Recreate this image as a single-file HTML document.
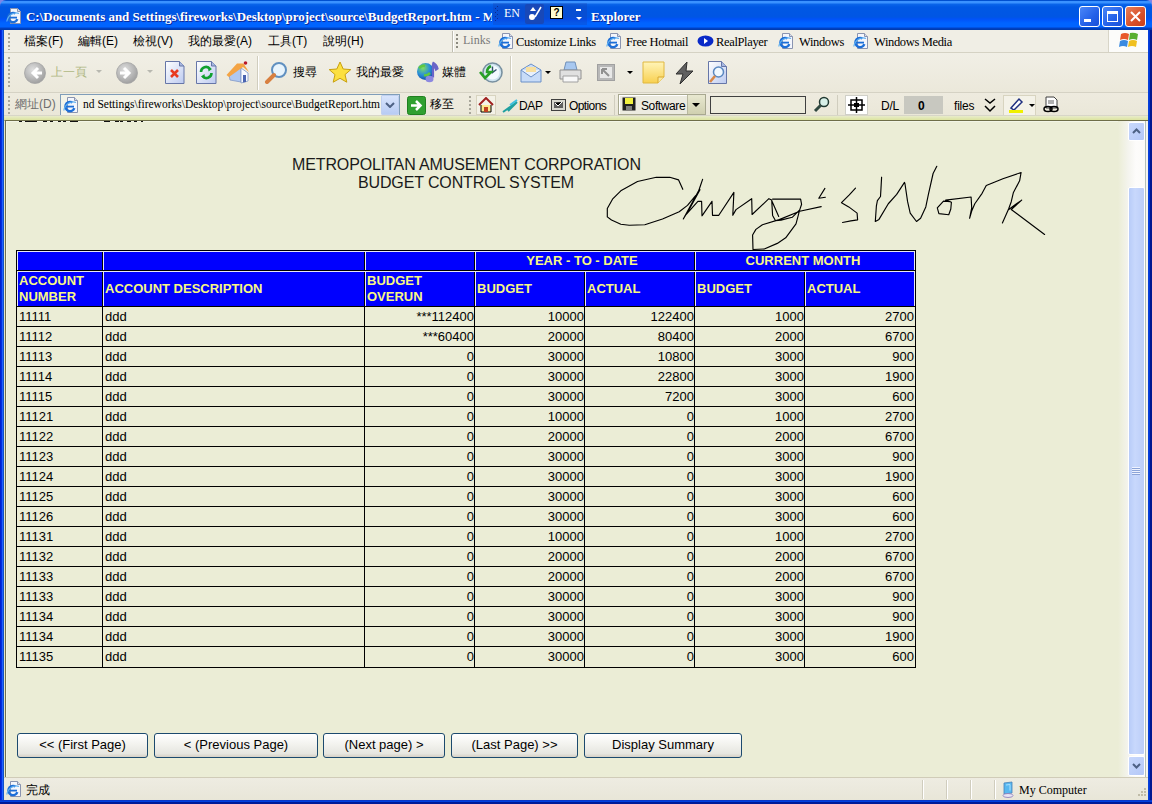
<!DOCTYPE html><html><head><meta charset="utf-8"><title>BudgetReport</title><style>
*{margin:0;padding:0;box-sizing:border-box}
html,body{width:1152px;height:804px;overflow:hidden;background:#7C86E8;font-family:"Liberation Sans",sans-serif}
.ab{position:absolute}
.t{position:absolute;white-space:nowrap;line-height:1}
.serif{font-family:"Liberation Serif",serif}
</style></head><body>
<svg width="0" height="0" style="position:absolute"><defs><linearGradient id="pg" x1="0" y1="0" x2="1" y2="1"><stop offset="0" stop-color="#FFFFFF"/><stop offset="1" stop-color="#BCCAF0"/></linearGradient><radialGradient id="gl" cx="0.35" cy="0.3" r="0.8"><stop offset="0" stop-color="#80E060"/><stop offset="0.5" stop-color="#2A90D8"/><stop offset="1" stop-color="#1040A0"/></radialGradient><radialGradient id="cg" cx="0.4" cy="0.35" r="0.7"><stop offset="0" stop-color="#E0E0E0"/><stop offset="1" stop-color="#9C9C9C"/></radialGradient><linearGradient id="nt" x1="0" y1="0" x2="0" y2="1"><stop offset="0" stop-color="#FFF4B8"/><stop offset="1" stop-color="#F8D050"/></linearGradient></defs></svg>
<div class="ab" style="left:0;top:8px;width:1152px;height:796px;background:#0831D9"></div>
<div class="ab" style="left:0;top:8px;width:4px;height:796px;background:linear-gradient(90deg,#0020D0 0 1px,#0030E0 1px 2px,#2060FF 2px 3px,#1050C8 3px 4px)"></div>
<div class="ab" style="left:1148px;top:8px;width:4px;height:796px;background:linear-gradient(90deg,#0840D8 0 1px,#0038D8 1px 2px,#001890 2px 4px)"></div>
<div class="ab" style="left:0;top:800px;width:1152px;height:4px;background:linear-gradient(#0838C8 0 1px,#0040E0 1px 2px,#001A98 2px 4px)"></div>
<div class="ab" style="left:0;top:0;width:1152px;height:30px;border-radius:6px 6px 0 0;background:linear-gradient(#0050D0 0,#0050D0 1px,#3A92FF 1px,#3A92FF 3px,#0A66EA 4px,#0058E4 7px,#0056E4 17px,#0052F8 19px,#0064FF 23px,#0064FF 27px,#0042C8 28px,#003AA8 30px)"></div>
<svg class="ab" style="left:6px;top:8px" width="16" height="16" viewBox="0 0 16 16"><path d="M4.5 0.5h7l3 3v12h-10z" fill="#F4F6FC" stroke="#8A94B0"/><path d="M11.5 0.5v3h3" fill="#D8DCE8" stroke="#8A94B0"/><circle cx="7" cy="9.5" r="4.6" fill="none" stroke="#1C6ED8" stroke-width="2.4" stroke-dasharray="22 7" transform="rotate(20 7 9.5)"/><path d="M3 9.6h8" stroke="#1C6ED8" stroke-width="1.8"/><path d="M0.8 13.5C2 7 8 3.5 13 5.5" stroke="#60B0F0" stroke-width="1.2" fill="none"/></svg>
<div class="t serif" style="left:26px;top:10px;font-size:13px;font-weight:bold;color:#fff;letter-spacing:-0.02px;text-shadow:1px 1px 0 #0A2A9A">C:\Documents and Settings\fireworks\Desktop\project\source\BudgetReport.htm - M</div>
<div class="ab" style="left:492px;top:0;width:96px;height:30px;background:linear-gradient(#0050D0 0,#0050D0 1px,#3A92FF 1px,#3A92FF 3px,#0A66EA 4px,#0058E4 7px,#0056E4 17px,#0052F8 19px,#0064FF 23px,#0064FF 27px,#0042C8 28px,#003AA8 30px)"></div>
<div class="ab" style="left:493px;top:3px;width:94px;height:22px;background:rgba(30,50,150,0.22)"></div>
<div class="t serif" style="left:504px;top:7px;font-size:12px;color:#fff">EN</div>
<div class="ab" style="left:525px;top:4px;width:19px;height:20px;background:#1848B8;border-radius:2px"></div>
<svg class="ab" style="left:527px;top:5px" width="15" height="17" viewBox="0 0 15 17"><path d="M3 6l3-4 3 4z" fill="#fff"/><circle cx="5" cy="12" r="3" fill="#fff"/><path d="M8 12L14 2" stroke="#fff" stroke-width="1.5"/></svg>
<div class="ab" style="left:497px;top:6px;width:1px;height:1px;background:#0A2A90"></div>
<div class="ab" style="left:495px;top:8px;width:1px;height:1px;background:#0A2A90"></div>
<div class="ab" style="left:497px;top:10px;width:1px;height:1px;background:#0A2A90"></div>
<div class="ab" style="left:495px;top:12px;width:1px;height:1px;background:#0A2A90"></div>
<div class="ab" style="left:497px;top:14px;width:1px;height:1px;background:#0A2A90"></div>
<div class="ab" style="left:495px;top:16px;width:1px;height:1px;background:#0A2A90"></div>
<div class="ab" style="left:497px;top:18px;width:1px;height:1px;background:#0A2A90"></div>
<div class="ab" style="left:495px;top:20px;width:1px;height:1px;background:#0A2A90"></div>
<div class="ab" style="left:550px;top:6px;width:13px;height:13px;background:#FFFCD0;border:1px solid #000;font:bold 10px 'Liberation Sans';text-align:center;line-height:11px">?</div>
<div class="ab" style="left:576px;top:9px;width:5px;height:2px;background:#fff"></div><svg class="ab" style="left:576px;top:17px" width="6" height="4"><path d="M0 0h6L3 3z" fill="#fff"/></svg>
<div class="t serif" style="left:591px;top:10px;font-size:13px;font-weight:bold;color:#fff;text-shadow:1px 1px 0 #0A2A9A">Explorer</div>
<div class="ab" style="left:1079px;top:6px;width:21px;height:21px;border:1px solid #fff;border-radius:3px;background:linear-gradient(135deg,#4A86F8,#2360E8 60%,#1A50D8)"><div class="ab" style="left:4px;top:12px;width:7px;height:3px;background:#fff"></div></div>
<div class="ab" style="left:1102px;top:6px;width:21px;height:21px;border:1px solid #fff;border-radius:3px;background:linear-gradient(135deg,#4A86F8,#2360E8 60%,#1A50D8)"><div class="ab" style="left:4px;top:4px;width:11px;height:11px;border:1px solid #fff;border-top-width:3px"></div></div>
<div class="ab" style="left:1125px;top:6px;width:21px;height:21px;border:1px solid #fff;border-radius:3px;background:linear-gradient(135deg,#E8805A,#D8502A 60%,#C8401A)"><svg class="ab" style="left:3px;top:3px" width="13" height="13"><path d="M2 2L11 11M11 2L2 11" stroke="#fff" stroke-width="2"/></svg></div>
<div class="ab" style="left:4px;top:30px;width:1144px;height:23px;background:#F0EEE5"></div>
<div class="ab" style="left:4px;top:52px;width:1144px;height:1px;background:#D5D2C4"></div>
<div class="t" style="left:24px;top:35px;font-size:12px;color:#000">檔案(F)</div>
<div class="t" style="left:78px;top:35px;font-size:12px;color:#000">編輯(E)</div>
<div class="t" style="left:133px;top:35px;font-size:12px;color:#000">檢視(V)</div>
<div class="t" style="left:188px;top:35px;font-size:12px;color:#000">我的最愛(A)</div>
<div class="t" style="left:268px;top:35px;font-size:12px;color:#000">工具(T)</div>
<div class="t" style="left:323px;top:35px;font-size:12px;color:#000">說明(H)</div>
<div class="ab" style="left:8px;top:33px;width:2px;height:17px;background:repeating-linear-gradient(#A8A69A 0 2px,transparent 2px 4px)"></div>
<div class="ab" style="left:452px;top:31px;width:1px;height:21px;background:#C0BEB2"></div><div class="ab" style="left:453px;top:31px;width:1px;height:21px;background:#fff"></div>
<div class="ab" style="left:456px;top:34px;width:2px;height:14px;background:repeating-linear-gradient(#8C8A80 0 2px,transparent 2px 4px)"></div>
<div class="t serif" style="left:463px;top:34px;font-size:12px;color:#7A7A7A">Links</div>
<svg class="ab" style="left:498px;top:33px" width="16" height="16" viewBox="0 0 16 16"><path d="M4.5 0.5h7l3 3v12h-10z" fill="#F4F6FC" stroke="#8A94B0"/><path d="M11.5 0.5v3h3" fill="#D8DCE8" stroke="#8A94B0"/><circle cx="7" cy="9.5" r="4.6" fill="none" stroke="#1C6ED8" stroke-width="2.4" stroke-dasharray="22 7" transform="rotate(20 7 9.5)"/><path d="M3 9.6h8" stroke="#1C6ED8" stroke-width="1.8"/><path d="M0.8 13.5C2 7 8 3.5 13 5.5" stroke="#60B0F0" stroke-width="1.2" fill="none"/></svg>
<div class="t serif" style="left:516px;top:36px;font-size:12.5px;letter-spacing:-0.35px;color:#000">Customize Links</div>
<svg class="ab" style="left:606px;top:33px" width="16" height="16" viewBox="0 0 16 16"><path d="M4.5 0.5h7l3 3v12h-10z" fill="#F4F6FC" stroke="#8A94B0"/><path d="M11.5 0.5v3h3" fill="#D8DCE8" stroke="#8A94B0"/><circle cx="7" cy="9.5" r="4.6" fill="none" stroke="#1C6ED8" stroke-width="2.4" stroke-dasharray="22 7" transform="rotate(20 7 9.5)"/><path d="M3 9.6h8" stroke="#1C6ED8" stroke-width="1.8"/><path d="M0.8 13.5C2 7 8 3.5 13 5.5" stroke="#60B0F0" stroke-width="1.2" fill="none"/></svg>
<div class="t serif" style="left:626px;top:36px;font-size:12.5px;letter-spacing:-0.35px;color:#000">Free Hotmail</div>
<svg class="ab" style="left:697px;top:34px" width="17" height="15" viewBox="0 0 17 15"><ellipse cx="8.5" cy="7" rx="8" ry="5.5" fill="#0A2AC8"/><path d="M7 4l4 3-4 3z" fill="#fff"/></svg>
<div class="t serif" style="left:716px;top:36px;font-size:12.5px;letter-spacing:-0.35px;color:#000">RealPlayer</div>
<svg class="ab" style="left:778px;top:33px" width="16" height="16" viewBox="0 0 16 16"><path d="M4.5 0.5h7l3 3v12h-10z" fill="#F4F6FC" stroke="#8A94B0"/><path d="M11.5 0.5v3h3" fill="#D8DCE8" stroke="#8A94B0"/><circle cx="7" cy="9.5" r="4.6" fill="none" stroke="#1C6ED8" stroke-width="2.4" stroke-dasharray="22 7" transform="rotate(20 7 9.5)"/><path d="M3 9.6h8" stroke="#1C6ED8" stroke-width="1.8"/><path d="M0.8 13.5C2 7 8 3.5 13 5.5" stroke="#60B0F0" stroke-width="1.2" fill="none"/></svg>
<div class="t serif" style="left:799px;top:36px;font-size:12.5px;letter-spacing:-0.35px;color:#000">Windows</div>
<svg class="ab" style="left:853px;top:33px" width="16" height="16" viewBox="0 0 16 16"><path d="M4.5 0.5h7l3 3v12h-10z" fill="#F4F6FC" stroke="#8A94B0"/><path d="M11.5 0.5v3h3" fill="#D8DCE8" stroke="#8A94B0"/><circle cx="7" cy="9.5" r="4.6" fill="none" stroke="#1C6ED8" stroke-width="2.4" stroke-dasharray="22 7" transform="rotate(20 7 9.5)"/><path d="M3 9.6h8" stroke="#1C6ED8" stroke-width="1.8"/><path d="M0.8 13.5C2 7 8 3.5 13 5.5" stroke="#60B0F0" stroke-width="1.2" fill="none"/></svg>
<div class="t serif" style="left:874px;top:36px;font-size:12.5px;letter-spacing:-0.35px;color:#000">Windows Media</div>
<div class="ab" style="left:1108px;top:30px;width:40px;height:22px;background:#FCFCFA;border-left:1px solid #D8D5C8"></div>
<svg class="ab" style="left:1119px;top:32px" width="20" height="18" viewBox="0 0 20 18"><path d="M2 2q4-2 8 0l-1 6q-4-2-8 0z" fill="#E8582A"/><path d="M11 1q4-1 8 1l-1 6q-4-2-8-0z" fill="#5AB030"/><path d="M1 9q4-2 8 0l-1 6q-4-2-8 0z" fill="#3A8AE0"/><path d="M10 9q4-2 8 0l-1 6q-4-2-8 0z" fill="#F0C020"/></svg>
<div class="ab" style="left:4px;top:53px;width:1144px;height:40px;background:linear-gradient(#F1EFE6,#EBE8DA)"></div>
<div class="ab" style="left:4px;top:92px;width:1144px;height:1px;background:#D5D2C4"></div>
<div class="ab" style="left:8px;top:57px;width:2px;height:32px;background:repeating-linear-gradient(#A8A69A 0 2px,transparent 2px 4px)"></div>
<svg class="ab" style="left:24px;top:62px" width="22" height="22" viewBox="0 0 22 22"><circle cx="11" cy="11" r="10.5" fill="url(#cg)" stroke="#A4A4A4" stroke-width="0.8"/><path d="M14 6l-5 5 5 5M9 11h9" stroke="#fff" stroke-width="3" fill="none"/></svg>
<div class="t" style="left:51px;top:66px;font-size:12px;color:#B0B884">上一頁</div>
<svg class="ab" style="left:96px;top:70px" width="6" height="4"><path d="M0 0h6L3 3z" fill="#B8B8B0"/></svg>
<svg class="ab" style="left:116px;top:62px" width="22" height="22" viewBox="0 0 22 22"><circle cx="11" cy="11" r="10.5" fill="url(#cg)" stroke="#A4A4A4" stroke-width="0.8"/><path d="M8 6l5 5-5 5M13 11H4" stroke="#fff" stroke-width="3" fill="none"/></svg>
<svg class="ab" style="left:147px;top:70px" width="6" height="4"><path d="M0 0h6L3 3z" fill="#B8B8B0"/></svg>
<svg class="ab" style="left:165px;top:61px" width="20" height="23" viewBox="0 0 20 23"><path d="M0.5 0.5h14l4.5 4.5v17.5h-18.5z" fill="url(#pg)" stroke="#6676A8"/><path d="M14.5 0.5v4.5h4.5" fill="#A8B8E0" stroke="#6676A8"/><path d="M6 9l7 7M13 9l-7 7" stroke="#E83A20" stroke-width="2.6"/></svg>
<svg class="ab" style="left:196px;top:61px" width="21" height="23" viewBox="0 0 21 23"><path d="M0.5 0.5h15l4.5 4.5v17.5h-19.5z" fill="url(#pg)" stroke="#6676A8"/><path d="M15.5 0.5v4.5h4.5" fill="#A8B8E0" stroke="#6676A8"/><path d="M5 11a5 5 0 0 1 9-3M15.5 12a5 5 0 0 1-9 3" stroke="#10A030" stroke-width="2.6" fill="none"/><path d="M12 5.5l4 2.5-3.5 2.5zM9 18l-4-2.5 3.5-2.5z" fill="#10A030"/></svg>
<svg class="ab" style="left:226px;top:60px" width="24" height="24" viewBox="0 0 24 24"><path d="M3 14L13 6l2 2v14L4 20z" fill="#B0C8F0" stroke="#8098C8" stroke-width="0.8"/><path d="M15 8l7 5v8l-7 2z" fill="#F8FAFF" stroke="#8098C8" stroke-width="0.8"/><path d="M0.5 15L11 3.5h6.5L23 12l-6-5L3 17z" fill="#F4A444"/><path d="M17 15h3v7l-3 0.6z" fill="#4A64B0"/><circle cx="19.5" cy="3" r="1.8" fill="#B81828"/></svg>
<div class="ab" style="left:257px;top:56px;width:1px;height:34px;background:#D0CDBE"></div><div class="ab" style="left:258px;top:56px;width:1px;height:34px;background:#fff"></div>
<svg class="ab" style="left:264px;top:61px" width="25" height="23" viewBox="0 0 25 23"><circle cx="15" cy="9" r="7" fill="#E8F4FC" stroke="#6090C0" stroke-width="2"/><path d="M10 14L3 21" stroke="#D88040" stroke-width="4" stroke-linecap="round"/></svg>
<div class="t" style="left:293px;top:66px;font-size:12px;color:#000">搜尋</div>
<svg class="ab" style="left:328px;top:61px" width="24" height="23" viewBox="0 0 24 23"><path d="M12 1l3.2 7 7.6.6-5.8 5 1.8 7.6L12 17.3 5.2 21.2 7 13.6 1.2 8.6 8.8 8z" fill="#FCE040" stroke="#C8A010"/></svg>
<div class="t" style="left:356px;top:66px;font-size:12px;color:#000">我的最愛</div>
<svg class="ab" style="left:416px;top:61px" width="23" height="23" viewBox="0 0 23 23"><circle cx="9.5" cy="10.5" r="8.5" fill="url(#gl)"/><path d="M3 7q3-3 6-2M8 14q3 1 6-2" stroke="#60C840" stroke-width="2.5" fill="none"/><path d="M16.5 1.5q4 2 5 6l-1.5 1q-1-3-3-4v12" stroke="#6A64C8" stroke-width="2.2" fill="#8A80D8"/><ellipse cx="13.5" cy="18" rx="4" ry="3.2" fill="#8C88E0"/></svg>
<div class="t" style="left:442px;top:66px;font-size:12px;color:#000">媒體</div>
<svg class="ab" style="left:479px;top:61px" width="24" height="23" viewBox="0 0 24 23"><circle cx="13.5" cy="11.5" r="9.5" fill="#D0E4F0" stroke="#7890A0" stroke-width="1.6"/><circle cx="13.5" cy="11.5" r="7" fill="#F4FAFF"/><path d="M13.5 5.5v6l4-3" stroke="#30506A" stroke-width="1.4" fill="none"/><path d="M1 11l5 6 6-6h-4q0-4 4-6" stroke="#28A028" stroke-width="2.6" fill="none"/></svg>
<div class="ab" style="left:510px;top:56px;width:1px;height:34px;background:#D0CDBE"></div><div class="ab" style="left:511px;top:56px;width:1px;height:34px;background:#fff"></div>
<svg class="ab" style="left:520px;top:62px" width="23" height="21" viewBox="0 0 23 21"><path d="M1 8L11 2l10 6v12H1z" fill="#C8DCF8" stroke="#6A90C8"/><path d="M1 8l10 7 10-7" stroke="#6A90C8" fill="#E8F0FC"/><path d="M6 5h10v5H6z" fill="#F8E0A0"/></svg>
<svg class="ab" style="left:545px;top:71px" width="6" height="4"><path d="M0 0h6L3 3z" fill="#000"/></svg>
<svg class="ab" style="left:559px;top:61px" width="23" height="22" viewBox="0 0 23 22"><path d="M7 1h9l2 8H5z" fill="#A8C8F0" stroke="#7090B8"/><path d="M1 9h21v9H1z" fill="#E0E0E0" stroke="#909090"/><path d="M4 15h15v6H4z" fill="#F8F8F8" stroke="#A0A0A0"/></svg>
<svg class="ab" style="left:597px;top:64px" width="18" height="17" viewBox="0 0 18 17"><rect x="0.5" y="0.5" width="17" height="16" fill="#B8B8B8" stroke="#A0A0A0"/><rect x="3" y="3" width="12" height="11" fill="#E8E8E8"/><path d="M5 5l7 7M5 5h5M5 5v5" stroke="#909090" stroke-width="2"/></svg>
<svg class="ab" style="left:627px;top:71px" width="6" height="4"><path d="M0 0h6L3 3z" fill="#000"/></svg>
<svg class="ab" style="left:642px;top:61px" width="23" height="23" viewBox="0 0 23 23"><path d="M1 1h21v15l-6 6H1z" fill="url(#nt)" stroke="#E0B840"/><path d="M16 22v-6h6" fill="#F8E8A0" stroke="#D8A830"/></svg>
<svg class="ab" style="left:673px;top:61px" width="23" height="24" viewBox="0 0 23 24"><path d="M14 1L3 13h7l-3 10 13-13h-7z" fill="#606060" stroke="#303030"/></svg>
<svg class="ab" style="left:708px;top:61px" width="20" height="23" viewBox="0 0 20 23"><path d="M0.5 0.5h13l5 5v17h-18z" fill="url(#pg)" stroke="#6676A8"/><path d="M13.5 0.5v5h5" fill="#A8B8E0" stroke="#6676A8"/><circle cx="10.5" cy="11" r="5" fill="#F0F8FF" stroke="#5A88C0" stroke-width="1.5"/><path d="M7 15l-5 6" stroke="#D88848" stroke-width="2.6"/></svg>
<div class="ab" style="left:4px;top:93px;width:1144px;height:24px;background:linear-gradient(#EEEBDF,#EAE7D8)"></div>
<div class="ab" style="left:8px;top:96px;width:2px;height:19px;background:repeating-linear-gradient(#A8A69A 0 2px,transparent 2px 4px)"></div>
<div class="t" style="left:15px;top:98px;font-size:12px;color:#6E6E6E">網址(D)</div>
<div class="ab" style="left:60px;top:94px;width:340px;height:22px;background:#F3F3E9;border:1px solid #7F9DB9"></div>
<svg class="ab" style="left:63px;top:97px" width="16" height="16" viewBox="0 0 16 16"><path d="M4.5 0.5h7l3 3v12h-10z" fill="#F4F6FC" stroke="#8A94B0"/><path d="M11.5 0.5v3h3" fill="#D8DCE8" stroke="#8A94B0"/><circle cx="7" cy="9.5" r="4.6" fill="none" stroke="#1C6ED8" stroke-width="2.4" stroke-dasharray="22 7" transform="rotate(20 7 9.5)"/><path d="M3 9.6h8" stroke="#1C6ED8" stroke-width="1.8"/><path d="M0.8 13.5C2 7 8 3.5 13 5.5" stroke="#60B0F0" stroke-width="1.2" fill="none"/></svg>
<div class="t serif" style="left:83px;top:99px;font-size:11.5px;color:#000">nd Settings\fireworks\Desktop\project\source\BudgetReport.htm</div>
<div class="ab" style="left:381px;top:95px;width:18px;height:20px;background:linear-gradient(#D8E4FC,#B8CCF4);border:1px solid #C0D0F0;border-radius:1px"></div>
<svg class="ab" style="left:385px;top:102px" width="10" height="6"><path d="M1 1l4 4 4-4" stroke="#4D6185" stroke-width="2" fill="none"/></svg>
<svg class="ab" style="left:407px;top:96px" width="19" height="19" viewBox="0 0 19 19"><rect x="0.5" y="0.5" width="18" height="18" rx="2" fill="#30A030" stroke="#208020"/><path d="M4 9.5h9M9 5l4.5 4.5L9 14" stroke="#fff" stroke-width="2.5" fill="none"/></svg>
<div class="t" style="left:430px;top:98px;font-size:12px;color:#000">移至</div>
<div class="ab" style="left:469px;top:96px;width:2px;height:19px;background:repeating-linear-gradient(#A8A69A 0 2px,transparent 2px 4px)"></div>
<div class="ab" style="left:476px;top:95px;width:20px;height:20px;background:#F4F2E8;border:1px solid #D8D4C0"></div>
<svg class="ab" style="left:478px;top:97px" width="16" height="16" viewBox="0 0 16 16"><path d="M1 8L8 1l7 7" stroke="#A02020" stroke-width="2" fill="none"/><path d="M3 8v7h10V8" fill="#FCE890" stroke="#000"/><rect x="6" y="10" width="4" height="5" fill="#C04020"/></svg>
<svg class="ab" style="left:502px;top:99px" width="16" height="14" viewBox="0 0 16 14"><path d="M1 13L15 3M6 12l9-9" stroke="#20A0A0" stroke-width="2"/><path d="M8 6L15 1" stroke="#40C0E0" stroke-width="2"/></svg>
<div class="t" style="left:519px;top:100px;font-size:12px;letter-spacing:-0.3px;color:#000">DAP</div>
<svg class="ab" style="left:551px;top:97px" width="15" height="14" viewBox="0 0 15 14"><rect x="0.5" y="2.5" width="14" height="11" fill="#D8D8D0" stroke="#404040"/><rect x="3" y="5" width="9" height="6" fill="#606060"/><path d="M4 6l3 3 4-4" stroke="#fff"/></svg>
<div class="t" style="left:569px;top:100px;font-size:12px;letter-spacing:-0.6px;color:#000">Options</div>
<div class="ab" style="left:614px;top:95px;width:1px;height:21px;background:#D0CDBE"></div>
<div class="ab" style="left:618px;top:94px;width:88px;height:21px;background:#ECEBE0;border:1px solid #A8A890;box-shadow:inset 1px 1px 0 #fff"></div>
<svg class="ab" style="left:622px;top:97px" width="14" height="14" viewBox="0 0 14 14"><rect x="0.5" y="0.5" width="13" height="13" fill="#202020"/><rect x="3" y="1" width="8" height="6" fill="#F0F040"/><rect x="4" y="9" width="6" height="4" fill="#808080"/></svg>
<div class="t" style="left:641px;top:100px;font-size:12px;letter-spacing:-0.4px;color:#000">Software</div>
<div class="ab" style="left:687px;top:95px;width:18px;height:19px;background:linear-gradient(#E8E8D0,#D0D0B0);border-left:1px solid #B8B8A0"></div>
<svg class="ab" style="left:692px;top:103px" width="8" height="4"><path d="M0 0h8L4 4z" fill="#000"/></svg>
<div class="ab" style="left:710px;top:96px;width:96px;height:18px;background:#ECEBDC;border:1px solid #404040"></div>
<svg class="ab" style="left:813px;top:96px" width="17" height="17" viewBox="0 0 17 17"><circle cx="11" cy="6" r="4.5" fill="#D8F0E8" stroke="#203830" stroke-width="1.5"/><path d="M8 9l-6 6" stroke="#304840" stroke-width="3"/></svg>
<div class="ab" style="left:837px;top:95px;width:1px;height:21px;background:#D0CDBE"></div>
<div class="ab" style="left:845px;top:95px;width:23px;height:20px;background:#fff;border:1px solid #D0D0C8"></div>
<svg class="ab" style="left:848px;top:97px" width="17" height="16" viewBox="0 0 17 16"><rect x="3" y="3" width="11" height="10" fill="none" stroke="#000" stroke-width="1.5"/><path d="M8.5 0v16M0 8h17" stroke="#000" stroke-width="1.5"/><rect x="6" y="6" width="5" height="4" fill="#000"/></svg>
<div class="t" style="left:881px;top:100px;font-size:12px;letter-spacing:-0.2px;color:#000">D/L</div>
<div class="ab" style="left:904px;top:96px;width:39px;height:18px;background:#C8C8C0"></div>
<div class="t" style="left:918px;top:100px;font-size:12px;font-weight:bold;color:#000">0</div>
<div class="t" style="left:954px;top:100px;font-size:12px;letter-spacing:-0.2px;color:#000">files</div>
<svg class="ab" style="left:984px;top:97px" width="12" height="16" viewBox="0 0 12 16"><path d="M1 2l5 4 5-4M1 9l5 5 5-5" stroke="#000" stroke-width="1.5" fill="none"/></svg>
<div class="ab" style="left:1003px;top:95px;width:33px;height:21px;background:#F4F2E8;border:1px solid #D8D4C0"></div>
<svg class="ab" style="left:1007px;top:96px" width="18" height="18" viewBox="0 0 18 18"><path d="M4 12L12 3l3 3-8 8z" fill="#fff" stroke="#203080" stroke-width="1.5"/><rect x="2" y="14" width="14" height="3" fill="#F0F000"/></svg>
<svg class="ab" style="left:1029px;top:104px" width="6" height="4"><path d="M0 0h6L3 3z" fill="#000"/></svg>
<svg class="ab" style="left:1042px;top:96px" width="18" height="18" viewBox="0 0 18 18"><path d="M4 1h8l3 3v8H4z" fill="#fff" stroke="#404040"/><path d="M6 5h6M6 7h6" stroke="#606060"/><ellipse cx="6" cy="13" rx="4" ry="2.5" fill="none" stroke="#000" stroke-width="1.5"/><ellipse cx="12" cy="13" rx="4" ry="2.5" fill="none" stroke="#000" stroke-width="1.5"/></svg>
<div class="ab" style="left:4px;top:115px;width:1144px;height:1px;background:#D8D6C8"></div>
<div class="ab" style="left:4px;top:116px;width:1144px;height:4px;background:linear-gradient(#E8EBCC,#E2E8B4 50%,#DCE4A0)"></div>
<div class="ab" style="left:4px;top:120px;width:1144px;height:658px;background:#EBEDD6;border-top:1px solid #6E6E48;border-left:1px solid #E4E6C8"></div>
<div class="ab" style="left:5px;top:120px;width:1px;height:657px;background:#707050"></div>
<div class="ab" style="left:6px;top:121px;width:1px;height:656px;background:#F2F5E6"></div>
<div class="ab" style="left:6px;top:121px;width:1112px;height:1px;background:#F2F5E6"></div>
<div class="ab" style="left:19px;top:121px;width:3px;height:1px;background:#111"></div>
<div class="ab" style="left:25px;top:121px;width:12px;height:1px;background:#111"></div>
<div class="ab" style="left:43px;top:121px;width:4px;height:1px;background:#111"></div>
<div class="ab" style="left:50px;top:121px;width:3px;height:1px;background:#111"></div>
<div class="ab" style="left:58px;top:121px;width:3px;height:1px;background:#111"></div>
<div class="ab" style="left:63px;top:121px;width:3px;height:1px;background:#111"></div>
<div class="ab" style="left:70px;top:121px;width:8px;height:1px;background:#111"></div>
<div class="ab" style="left:104px;top:121px;width:6px;height:1px;background:#111"></div>
<div class="ab" style="left:115px;top:121px;width:4px;height:1px;background:#111"></div>
<div class="ab" style="left:120px;top:121px;width:3px;height:1px;background:#111"></div>
<div class="ab" style="left:127px;top:121px;width:4px;height:1px;background:#111"></div>
<div class="ab" style="left:134px;top:121px;width:3px;height:1px;background:#111"></div>
<div class="ab" style="left:141px;top:121px;width:2px;height:1px;background:#111"></div>
<div class="t" style="left:292px;top:157px;width:348px;text-align:center;font-size:16px;letter-spacing:-0.12px;color:#1A1A1A">METROPOLITAN AMUSEMENT CORPORATION</div>
<div class="t" style="left:292px;top:175px;width:348px;text-align:center;font-size:16px;letter-spacing:-0.12px;color:#1A1A1A">BUDGET CONTROL SYSTEM</div>
<svg class="ab" style="left:0;top:0" width="1152" height="804"><path d="M682.8 189.3L678.6 179.9L669.8 177.3L656.3 177.3L637.5 181.5L620.8 190.8L612.5 199.2L607.3 208.5L607.3 216.9L611.5 220L620.8 224.2L629.2 225.2L644.8 224.7L662.5 219L679.2 211.7L687.5 205.4L697.9 192.9L702.6 179.4L699 190L683.3 219L690 208L700 189.8M684.9 215.8L697.9 201.3L701.6 201.3L702 215.8L712 201.3L712.5 215.3L718.8 215.3L733.9 192.4L732.8 215.3L736 209.6L751.7 198.7L752.1 214.5L768.9 198.7L771.7 200L772.6 215.4L775.4 220.6M771.9 201L778.7 216.4M772.6 199.1L800.6 199.1L801.6 204.3L799.7 209.9L792.2 217.3L781 220.1L775.4 220.6M799.7 209.9L796 223.8L785.7 237.8L777.3 243.4L764.3 249L753 249.5L752.6 235L755.9 229.4L762.4 224.8L779.2 219.6L799.7 211.25L821.2 206.6M824.9 188.4L818.8 198.2L825.4 197.3M855.5 188.1L849.3 194.9L841.5 202.7L848.75 206.9L857.1 213.1L857.6 219.9L850.8 220.9L842.5 222.5M881.6 177.2L881 188.1L880.5 196.5L877.4 200.6L876.4 205.8L875.3 221.5L879 219.4L888.3 203.75L896.7 194.4L904.5 182.4L905 184L907.6 201.7L910.2 213.1L916.5 221.5L920.6 218.3L925.8 206.9L928.4 194.4L933.1 173.5L936.8 166.25M950.8 201.7L943.5 201.1L937.3 207.9L938.9 213.6L948.75 214.7L950.8 209L951.4 202.2L945.6 200.1L971.1 197L971.7 207.9L969.6 218.3L971.7 211L974.8 203.75L982.1 193.3L986.25 185.5L1002.9 178.75L1021.1 172.5L1019.6 180.8L1013.3 192.8L1011.25 201.7L1008.6 209L1002.4 223M1008.1 210L1016.5 203.75L1021.7 200.1L1011.25 209.5L1044.6 234.5" fill="none" stroke="#000" stroke-width="1.15" stroke-linejoin="round" stroke-linecap="round"/></svg>
<div class="ab" style="left:16px;top:250px;width:900px;height:57px;background:#0000FF"></div>
<div class="ab" style="left:16px;top:306px;width:900px;height:362px;background:#EBEDD6"></div>
<div class="ab" style="left:16px;top:250px;width:1px;height:57px;background:#000"></div>
<div class="ab" style="left:17px;top:251px;width:1px;height:55px;background:#E8E8F8"></div>
<div class="ab" style="left:102px;top:250px;width:1px;height:57px;background:#000"></div>
<div class="ab" style="left:103px;top:251px;width:1px;height:55px;background:#E8E8F8"></div>
<div class="ab" style="left:364px;top:250px;width:1px;height:57px;background:#000"></div>
<div class="ab" style="left:365px;top:251px;width:1px;height:55px;background:#E8E8F8"></div>
<div class="ab" style="left:474px;top:250px;width:1px;height:57px;background:#000"></div>
<div class="ab" style="left:475px;top:251px;width:1px;height:55px;background:#E8E8F8"></div>
<div class="ab" style="left:584px;top:270px;width:1px;height:37px;background:#000"></div>
<div class="ab" style="left:585px;top:271px;width:1px;height:35px;background:#E8E8F8"></div>
<div class="ab" style="left:694px;top:250px;width:1px;height:57px;background:#000"></div>
<div class="ab" style="left:695px;top:251px;width:1px;height:55px;background:#E8E8F8"></div>
<div class="ab" style="left:804px;top:270px;width:1px;height:37px;background:#000"></div>
<div class="ab" style="left:805px;top:271px;width:1px;height:35px;background:#E8E8F8"></div>
<div class="ab" style="left:914px;top:251px;width:1px;height:55px;background:#E8E8F8"></div>
<div class="ab" style="left:915px;top:250px;width:1px;height:418px;background:#000"></div>
<div class="ab" style="left:16px;top:250px;width:900px;height:1px;background:#000"></div>
<div class="ab" style="left:17px;top:251px;width:898px;height:1px;background:#E8E8F8"></div>
<div class="ab" style="left:16px;top:270px;width:900px;height:1px;background:#000"></div>
<div class="ab" style="left:17px;top:271px;width:898px;height:1px;background:#E8E8F8"></div>
<div class="ab" style="left:16px;top:306px;width:1px;height:362px;background:#000"></div>
<div class="ab" style="left:102px;top:306px;width:1px;height:362px;background:#000"></div>
<div class="ab" style="left:364px;top:306px;width:1px;height:362px;background:#000"></div>
<div class="ab" style="left:474px;top:306px;width:1px;height:362px;background:#000"></div>
<div class="ab" style="left:584px;top:306px;width:1px;height:362px;background:#000"></div>
<div class="ab" style="left:694px;top:306px;width:1px;height:362px;background:#000"></div>
<div class="ab" style="left:804px;top:306px;width:1px;height:362px;background:#000"></div>
<div class="ab" style="left:16px;top:306px;width:900px;height:1px;background:#000"></div>
<div class="ab" style="left:16px;top:326px;width:900px;height:1px;background:#000"></div>
<div class="ab" style="left:16px;top:346px;width:900px;height:1px;background:#000"></div>
<div class="ab" style="left:16px;top:366px;width:900px;height:1px;background:#000"></div>
<div class="ab" style="left:16px;top:386px;width:900px;height:1px;background:#000"></div>
<div class="ab" style="left:16px;top:406px;width:900px;height:1px;background:#000"></div>
<div class="ab" style="left:16px;top:426px;width:900px;height:1px;background:#000"></div>
<div class="ab" style="left:16px;top:446px;width:900px;height:1px;background:#000"></div>
<div class="ab" style="left:16px;top:466px;width:900px;height:1px;background:#000"></div>
<div class="ab" style="left:16px;top:486px;width:900px;height:1px;background:#000"></div>
<div class="ab" style="left:16px;top:506px;width:900px;height:1px;background:#000"></div>
<div class="ab" style="left:16px;top:526px;width:900px;height:1px;background:#000"></div>
<div class="ab" style="left:16px;top:546px;width:900px;height:1px;background:#000"></div>
<div class="ab" style="left:16px;top:566px;width:900px;height:1px;background:#000"></div>
<div class="ab" style="left:16px;top:586px;width:900px;height:1px;background:#000"></div>
<div class="ab" style="left:16px;top:606px;width:900px;height:1px;background:#000"></div>
<div class="ab" style="left:16px;top:626px;width:900px;height:1px;background:#000"></div>
<div class="ab" style="left:16px;top:646px;width:900px;height:1px;background:#000"></div>
<div class="ab" style="left:16px;top:667px;width:900px;height:1px;background:#000"></div>
<div class="t" style="left:472px;top:254px;width:220px;text-align:center;font-size:13px;font-weight:bold;color:#F8F884">YEAR - TO - DATE</div>
<div class="t" style="left:693px;top:254px;width:220px;text-align:center;font-size:13px;font-weight:bold;color:#F8F884">CURRENT MONTH</div>
<div class="t" style="left:19px;top:273px;font-size:13px;font-weight:bold;color:#F8F884;line-height:16px">ACCOUNT<br>NUMBER</div>
<div class="t" style="left:105px;top:282px;font-size:13px;font-weight:bold;color:#F8F884">ACCOUNT DESCRIPTION</div>
<div class="t" style="left:367px;top:273px;font-size:13px;font-weight:bold;color:#F8F884;line-height:16px">BUDGET<br>OVERUN</div>
<div class="t" style="left:477px;top:282px;font-size:13px;font-weight:bold;color:#F8F884">BUDGET</div>
<div class="t" style="left:587px;top:282px;font-size:13px;font-weight:bold;color:#F8F884">ACTUAL</div>
<div class="t" style="left:697px;top:282px;font-size:13px;font-weight:bold;color:#F8F884">BUDGET</div>
<div class="t" style="left:807px;top:282px;font-size:13px;font-weight:bold;color:#F8F884">ACTUAL</div>
<div class="t" style="left:19px;top:310px;font-size:13px;color:#000">11111</div>
<div class="t" style="left:105px;top:310px;font-size:13px;color:#000">ddd</div>
<div class="t" style="left:364px;top:310px;width:110px;text-align:right;font-size:13px;color:#000">***112400</div>
<div class="t" style="left:474px;top:310px;width:110px;text-align:right;font-size:13px;color:#000">10000</div>
<div class="t" style="left:584px;top:310px;width:110px;text-align:right;font-size:13px;color:#000">122400</div>
<div class="t" style="left:694px;top:310px;width:110px;text-align:right;font-size:13px;color:#000">1000</div>
<div class="t" style="left:804px;top:310px;width:110px;text-align:right;font-size:13px;color:#000">2700</div>
<div class="t" style="left:19px;top:330px;font-size:13px;color:#000">11112</div>
<div class="t" style="left:105px;top:330px;font-size:13px;color:#000">ddd</div>
<div class="t" style="left:364px;top:330px;width:110px;text-align:right;font-size:13px;color:#000">***60400</div>
<div class="t" style="left:474px;top:330px;width:110px;text-align:right;font-size:13px;color:#000">20000</div>
<div class="t" style="left:584px;top:330px;width:110px;text-align:right;font-size:13px;color:#000">80400</div>
<div class="t" style="left:694px;top:330px;width:110px;text-align:right;font-size:13px;color:#000">2000</div>
<div class="t" style="left:804px;top:330px;width:110px;text-align:right;font-size:13px;color:#000">6700</div>
<div class="t" style="left:19px;top:350px;font-size:13px;color:#000">11113</div>
<div class="t" style="left:105px;top:350px;font-size:13px;color:#000">ddd</div>
<div class="t" style="left:364px;top:350px;width:110px;text-align:right;font-size:13px;color:#000">0</div>
<div class="t" style="left:474px;top:350px;width:110px;text-align:right;font-size:13px;color:#000">30000</div>
<div class="t" style="left:584px;top:350px;width:110px;text-align:right;font-size:13px;color:#000">10800</div>
<div class="t" style="left:694px;top:350px;width:110px;text-align:right;font-size:13px;color:#000">3000</div>
<div class="t" style="left:804px;top:350px;width:110px;text-align:right;font-size:13px;color:#000">900</div>
<div class="t" style="left:19px;top:370px;font-size:13px;color:#000">11114</div>
<div class="t" style="left:105px;top:370px;font-size:13px;color:#000">ddd</div>
<div class="t" style="left:364px;top:370px;width:110px;text-align:right;font-size:13px;color:#000">0</div>
<div class="t" style="left:474px;top:370px;width:110px;text-align:right;font-size:13px;color:#000">30000</div>
<div class="t" style="left:584px;top:370px;width:110px;text-align:right;font-size:13px;color:#000">22800</div>
<div class="t" style="left:694px;top:370px;width:110px;text-align:right;font-size:13px;color:#000">3000</div>
<div class="t" style="left:804px;top:370px;width:110px;text-align:right;font-size:13px;color:#000">1900</div>
<div class="t" style="left:19px;top:390px;font-size:13px;color:#000">11115</div>
<div class="t" style="left:105px;top:390px;font-size:13px;color:#000">ddd</div>
<div class="t" style="left:364px;top:390px;width:110px;text-align:right;font-size:13px;color:#000">0</div>
<div class="t" style="left:474px;top:390px;width:110px;text-align:right;font-size:13px;color:#000">30000</div>
<div class="t" style="left:584px;top:390px;width:110px;text-align:right;font-size:13px;color:#000">7200</div>
<div class="t" style="left:694px;top:390px;width:110px;text-align:right;font-size:13px;color:#000">3000</div>
<div class="t" style="left:804px;top:390px;width:110px;text-align:right;font-size:13px;color:#000">600</div>
<div class="t" style="left:19px;top:410px;font-size:13px;color:#000">11121</div>
<div class="t" style="left:105px;top:410px;font-size:13px;color:#000">ddd</div>
<div class="t" style="left:364px;top:410px;width:110px;text-align:right;font-size:13px;color:#000">0</div>
<div class="t" style="left:474px;top:410px;width:110px;text-align:right;font-size:13px;color:#000">10000</div>
<div class="t" style="left:584px;top:410px;width:110px;text-align:right;font-size:13px;color:#000">0</div>
<div class="t" style="left:694px;top:410px;width:110px;text-align:right;font-size:13px;color:#000">1000</div>
<div class="t" style="left:804px;top:410px;width:110px;text-align:right;font-size:13px;color:#000">2700</div>
<div class="t" style="left:19px;top:430px;font-size:13px;color:#000">11122</div>
<div class="t" style="left:105px;top:430px;font-size:13px;color:#000">ddd</div>
<div class="t" style="left:364px;top:430px;width:110px;text-align:right;font-size:13px;color:#000">0</div>
<div class="t" style="left:474px;top:430px;width:110px;text-align:right;font-size:13px;color:#000">20000</div>
<div class="t" style="left:584px;top:430px;width:110px;text-align:right;font-size:13px;color:#000">0</div>
<div class="t" style="left:694px;top:430px;width:110px;text-align:right;font-size:13px;color:#000">2000</div>
<div class="t" style="left:804px;top:430px;width:110px;text-align:right;font-size:13px;color:#000">6700</div>
<div class="t" style="left:19px;top:450px;font-size:13px;color:#000">11123</div>
<div class="t" style="left:105px;top:450px;font-size:13px;color:#000">ddd</div>
<div class="t" style="left:364px;top:450px;width:110px;text-align:right;font-size:13px;color:#000">0</div>
<div class="t" style="left:474px;top:450px;width:110px;text-align:right;font-size:13px;color:#000">30000</div>
<div class="t" style="left:584px;top:450px;width:110px;text-align:right;font-size:13px;color:#000">0</div>
<div class="t" style="left:694px;top:450px;width:110px;text-align:right;font-size:13px;color:#000">3000</div>
<div class="t" style="left:804px;top:450px;width:110px;text-align:right;font-size:13px;color:#000">900</div>
<div class="t" style="left:19px;top:470px;font-size:13px;color:#000">11124</div>
<div class="t" style="left:105px;top:470px;font-size:13px;color:#000">ddd</div>
<div class="t" style="left:364px;top:470px;width:110px;text-align:right;font-size:13px;color:#000">0</div>
<div class="t" style="left:474px;top:470px;width:110px;text-align:right;font-size:13px;color:#000">30000</div>
<div class="t" style="left:584px;top:470px;width:110px;text-align:right;font-size:13px;color:#000">0</div>
<div class="t" style="left:694px;top:470px;width:110px;text-align:right;font-size:13px;color:#000">3000</div>
<div class="t" style="left:804px;top:470px;width:110px;text-align:right;font-size:13px;color:#000">1900</div>
<div class="t" style="left:19px;top:490px;font-size:13px;color:#000">11125</div>
<div class="t" style="left:105px;top:490px;font-size:13px;color:#000">ddd</div>
<div class="t" style="left:364px;top:490px;width:110px;text-align:right;font-size:13px;color:#000">0</div>
<div class="t" style="left:474px;top:490px;width:110px;text-align:right;font-size:13px;color:#000">30000</div>
<div class="t" style="left:584px;top:490px;width:110px;text-align:right;font-size:13px;color:#000">0</div>
<div class="t" style="left:694px;top:490px;width:110px;text-align:right;font-size:13px;color:#000">3000</div>
<div class="t" style="left:804px;top:490px;width:110px;text-align:right;font-size:13px;color:#000">600</div>
<div class="t" style="left:19px;top:510px;font-size:13px;color:#000">11126</div>
<div class="t" style="left:105px;top:510px;font-size:13px;color:#000">ddd</div>
<div class="t" style="left:364px;top:510px;width:110px;text-align:right;font-size:13px;color:#000">0</div>
<div class="t" style="left:474px;top:510px;width:110px;text-align:right;font-size:13px;color:#000">30000</div>
<div class="t" style="left:584px;top:510px;width:110px;text-align:right;font-size:13px;color:#000">0</div>
<div class="t" style="left:694px;top:510px;width:110px;text-align:right;font-size:13px;color:#000">3000</div>
<div class="t" style="left:804px;top:510px;width:110px;text-align:right;font-size:13px;color:#000">600</div>
<div class="t" style="left:19px;top:530px;font-size:13px;color:#000">11131</div>
<div class="t" style="left:105px;top:530px;font-size:13px;color:#000">ddd</div>
<div class="t" style="left:364px;top:530px;width:110px;text-align:right;font-size:13px;color:#000">0</div>
<div class="t" style="left:474px;top:530px;width:110px;text-align:right;font-size:13px;color:#000">10000</div>
<div class="t" style="left:584px;top:530px;width:110px;text-align:right;font-size:13px;color:#000">0</div>
<div class="t" style="left:694px;top:530px;width:110px;text-align:right;font-size:13px;color:#000">1000</div>
<div class="t" style="left:804px;top:530px;width:110px;text-align:right;font-size:13px;color:#000">2700</div>
<div class="t" style="left:19px;top:550px;font-size:13px;color:#000">11132</div>
<div class="t" style="left:105px;top:550px;font-size:13px;color:#000">ddd</div>
<div class="t" style="left:364px;top:550px;width:110px;text-align:right;font-size:13px;color:#000">0</div>
<div class="t" style="left:474px;top:550px;width:110px;text-align:right;font-size:13px;color:#000">20000</div>
<div class="t" style="left:584px;top:550px;width:110px;text-align:right;font-size:13px;color:#000">0</div>
<div class="t" style="left:694px;top:550px;width:110px;text-align:right;font-size:13px;color:#000">2000</div>
<div class="t" style="left:804px;top:550px;width:110px;text-align:right;font-size:13px;color:#000">6700</div>
<div class="t" style="left:19px;top:570px;font-size:13px;color:#000">11133</div>
<div class="t" style="left:105px;top:570px;font-size:13px;color:#000">ddd</div>
<div class="t" style="left:364px;top:570px;width:110px;text-align:right;font-size:13px;color:#000">0</div>
<div class="t" style="left:474px;top:570px;width:110px;text-align:right;font-size:13px;color:#000">20000</div>
<div class="t" style="left:584px;top:570px;width:110px;text-align:right;font-size:13px;color:#000">0</div>
<div class="t" style="left:694px;top:570px;width:110px;text-align:right;font-size:13px;color:#000">2000</div>
<div class="t" style="left:804px;top:570px;width:110px;text-align:right;font-size:13px;color:#000">6700</div>
<div class="t" style="left:19px;top:590px;font-size:13px;color:#000">11133</div>
<div class="t" style="left:105px;top:590px;font-size:13px;color:#000">ddd</div>
<div class="t" style="left:364px;top:590px;width:110px;text-align:right;font-size:13px;color:#000">0</div>
<div class="t" style="left:474px;top:590px;width:110px;text-align:right;font-size:13px;color:#000">30000</div>
<div class="t" style="left:584px;top:590px;width:110px;text-align:right;font-size:13px;color:#000">0</div>
<div class="t" style="left:694px;top:590px;width:110px;text-align:right;font-size:13px;color:#000">3000</div>
<div class="t" style="left:804px;top:590px;width:110px;text-align:right;font-size:13px;color:#000">900</div>
<div class="t" style="left:19px;top:610px;font-size:13px;color:#000">11134</div>
<div class="t" style="left:105px;top:610px;font-size:13px;color:#000">ddd</div>
<div class="t" style="left:364px;top:610px;width:110px;text-align:right;font-size:13px;color:#000">0</div>
<div class="t" style="left:474px;top:610px;width:110px;text-align:right;font-size:13px;color:#000">30000</div>
<div class="t" style="left:584px;top:610px;width:110px;text-align:right;font-size:13px;color:#000">0</div>
<div class="t" style="left:694px;top:610px;width:110px;text-align:right;font-size:13px;color:#000">3000</div>
<div class="t" style="left:804px;top:610px;width:110px;text-align:right;font-size:13px;color:#000">900</div>
<div class="t" style="left:19px;top:630px;font-size:13px;color:#000">11134</div>
<div class="t" style="left:105px;top:630px;font-size:13px;color:#000">ddd</div>
<div class="t" style="left:364px;top:630px;width:110px;text-align:right;font-size:13px;color:#000">0</div>
<div class="t" style="left:474px;top:630px;width:110px;text-align:right;font-size:13px;color:#000">30000</div>
<div class="t" style="left:584px;top:630px;width:110px;text-align:right;font-size:13px;color:#000">0</div>
<div class="t" style="left:694px;top:630px;width:110px;text-align:right;font-size:13px;color:#000">3000</div>
<div class="t" style="left:804px;top:630px;width:110px;text-align:right;font-size:13px;color:#000">1900</div>
<div class="t" style="left:19px;top:650px;font-size:13px;color:#000">11135</div>
<div class="t" style="left:105px;top:650px;font-size:13px;color:#000">ddd</div>
<div class="t" style="left:364px;top:650px;width:110px;text-align:right;font-size:13px;color:#000">0</div>
<div class="t" style="left:474px;top:650px;width:110px;text-align:right;font-size:13px;color:#000">30000</div>
<div class="t" style="left:584px;top:650px;width:110px;text-align:right;font-size:13px;color:#000">0</div>
<div class="t" style="left:694px;top:650px;width:110px;text-align:right;font-size:13px;color:#000">3000</div>
<div class="t" style="left:804px;top:650px;width:110px;text-align:right;font-size:13px;color:#000">600</div>
<div class="ab" style="left:17px;top:733px;width:131px;height:25px;border:1px solid #1C4A6E;border-radius:3px;background:linear-gradient(#FFFFFF,#F4F4F0 40%,#E6E6E0 85%,#D6D0C5);font-size:13px;color:#000;text-align:center;line-height:22px;white-space:nowrap">&lt;&lt; (First Page)</div>
<div class="ab" style="left:154px;top:733px;width:164px;height:25px;border:1px solid #1C4A6E;border-radius:3px;background:linear-gradient(#FFFFFF,#F4F4F0 40%,#E6E6E0 85%,#D6D0C5);font-size:13px;color:#000;text-align:center;line-height:22px;white-space:nowrap">&lt; (Previous Page)</div>
<div class="ab" style="left:323px;top:733px;width:122px;height:25px;border:1px solid #1C4A6E;border-radius:3px;background:linear-gradient(#FFFFFF,#F4F4F0 40%,#E6E6E0 85%,#D6D0C5);font-size:13px;color:#000;text-align:center;line-height:22px;white-space:nowrap">(Next page) &gt;</div>
<div class="ab" style="left:451px;top:733px;width:127px;height:25px;border:1px solid #1C4A6E;border-radius:3px;background:linear-gradient(#FFFFFF,#F4F4F0 40%,#E6E6E0 85%,#D6D0C5);font-size:13px;color:#000;text-align:center;line-height:22px;white-space:nowrap">(Last Page) &gt;&gt;</div>
<div class="ab" style="left:584px;top:733px;width:158px;height:25px;border:1px solid #1C4A6E;border-radius:3px;background:linear-gradient(#FFFFFF,#F4F4F0 40%,#E6E6E0 85%,#D6D0C5);font-size:13px;color:#000;text-align:center;line-height:22px;white-space:nowrap">Display Summary</div>
<div class="ab" style="left:1118px;top:121px;width:30px;height:656px;background:linear-gradient(90deg,#EBEDD6,#F4F4EE 35%,#FDFCFB 60%,#FBFBF8 90%,#F0F0E8)"></div>
<div class="ab" style="left:1145px;top:121px;width:1px;height:656px;background:#B4C0B8"></div>
<div class="ab" style="left:1128px;top:122px;width:17px;height:19px;border:1px solid #fff;border-radius:2px;background:linear-gradient(135deg,#C8D8FC,#B4C8F8)"></div>
<svg class="ab" style="left:1132px;top:128px" width="9" height="6"><path d="M1 5l3.5-3.5L8 5" stroke="#4D6185" stroke-width="2" fill="none"/></svg>
<div class="ab" style="left:1128px;top:187px;width:17px;height:568px;border:1px solid #fff;border-radius:2px;background:linear-gradient(90deg,#B8CCF8,#C8D8FC 40%,#BCCEF8)"></div>
<div class="ab" style="left:1132px;top:467px;width:8px;height:8px;background:repeating-linear-gradient(#EEF2FE 0 1px,#8CA4D8 1px 2px)"></div>
<div class="ab" style="left:1128px;top:756px;width:17px;height:20px;border:1px solid #fff;border-radius:2px;background:linear-gradient(135deg,#C8D8FC,#B4C8F8)"></div>
<svg class="ab" style="left:1132px;top:763px" width="9" height="6"><path d="M1 1l3.5 3.5L8 1" stroke="#4D6185" stroke-width="2" fill="none"/></svg>
<div class="ab" style="left:4px;top:777px;width:1144px;height:23px;background:linear-gradient(#D0CCB8 0 1px,#EEECE2 1px,#E8E6D8)"></div>
<svg class="ab" style="left:6px;top:781px" width="16" height="16" viewBox="0 0 16 16"><path d="M4.5 0.5h7l3 3v12h-10z" fill="#F4F6FC" stroke="#8A94B0"/><path d="M11.5 0.5v3h3" fill="#D8DCE8" stroke="#8A94B0"/><circle cx="7" cy="9.5" r="4.6" fill="none" stroke="#1C6ED8" stroke-width="2.4" stroke-dasharray="22 7" transform="rotate(20 7 9.5)"/><path d="M3 9.6h8" stroke="#1C6ED8" stroke-width="1.8"/><path d="M0.8 13.5C2 7 8 3.5 13 5.5" stroke="#60B0F0" stroke-width="1.2" fill="none"/></svg>
<div class="t" style="left:26px;top:784px;font-size:12px;color:#000">完成</div>
<div class="ab" style="left:922px;top:780px;width:1px;height:19px;background:#D0CDBE"></div><div class="ab" style="left:923px;top:780px;width:1px;height:19px;background:#fff"></div>
<div class="ab" style="left:946px;top:780px;width:1px;height:19px;background:#D0CDBE"></div><div class="ab" style="left:947px;top:780px;width:1px;height:19px;background:#fff"></div>
<div class="ab" style="left:970px;top:780px;width:1px;height:19px;background:#D0CDBE"></div><div class="ab" style="left:971px;top:780px;width:1px;height:19px;background:#fff"></div>
<div class="ab" style="left:994px;top:780px;width:1px;height:19px;background:#D0CDBE"></div><div class="ab" style="left:995px;top:780px;width:1px;height:19px;background:#fff"></div>
<svg class="ab" style="left:1001px;top:781px" width="14" height="17" viewBox="0 0 14 17"><path d="M3 2l8-1v11l-8 1z" fill="#58B8F0" stroke="#4880B8" stroke-width="0.8"/><path d="M5 4l4-0.5v6" stroke="#A8E0FF" fill="none"/><ellipse cx="7" cy="14.5" rx="5" ry="2" fill="#E8E4F4" stroke="#8878B8" stroke-width="0.8"/></svg>
<div class="t serif" style="left:1019px;top:784px;font-size:12px;color:#000">My Computer</div>
<div class="ab" style="left:1144px;top:788px;width:2px;height:2px;background:#C0BCA8"></div>
<div class="ab" style="left:1141px;top:791px;width:2px;height:2px;background:#C0BCA8"></div>
<div class="ab" style="left:1144px;top:791px;width:2px;height:2px;background:#C0BCA8"></div>
<div class="ab" style="left:1138px;top:794px;width:2px;height:2px;background:#C0BCA8"></div>
<div class="ab" style="left:1141px;top:794px;width:2px;height:2px;background:#C0BCA8"></div>
<div class="ab" style="left:1144px;top:794px;width:2px;height:2px;background:#C0BCA8"></div>
</body></html>
